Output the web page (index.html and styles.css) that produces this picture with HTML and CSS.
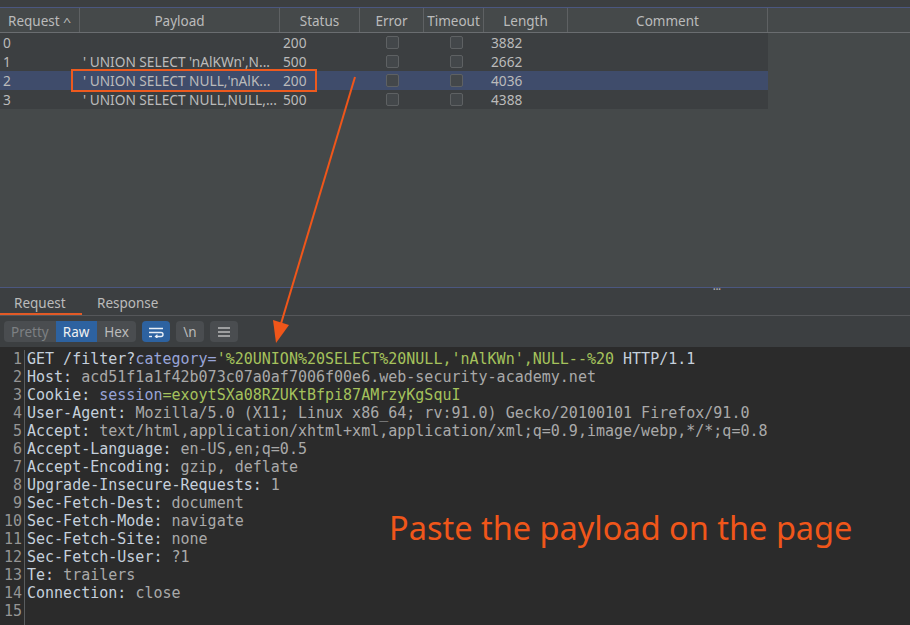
FILE: index.html
```html
<!DOCTYPE html>
<html>
<head>
<meta charset="utf-8">
<link rel="stylesheet" href="styles.css">
</head>
<body>
<div class="app">
  <div class="topstrip"></div>
  <section class="results">
    <div class="thead">
      <div class="th c-req">Request <span class="sort">^</span></div>
      <div class="th c-pay">Payload</div>
      <div class="th c-sta">Status</div>
      <div class="th c-err">Error</div>
      <div class="th c-tim">Timeout</div>
      <div class="th c-len">Length</div>
      <div class="th c-com">Comment</div>
    </div>
    <div class="tbody">
      <div class="tr">
        <div class="td c-req">0</div><div class="td c-pay"></div><div class="td c-sta">200</div>
        <div class="td c-err"><span class="cb"></span></div><div class="td c-tim"><span class="cb"></span></div>
        <div class="td c-len">3882</div><div class="td c-com"></div>
      </div>
      <div class="tr">
        <div class="td c-req">1</div><div class="td c-pay">' UNION SELECT 'nAlKWn',N...</div><div class="td c-sta">500</div>
        <div class="td c-err"><span class="cb"></span></div><div class="td c-tim"><span class="cb"></span></div>
        <div class="td c-len">2662</div><div class="td c-com"></div>
      </div>
      <div class="tr sel">
        <div class="td c-req">2</div><div class="td c-pay">' UNION SELECT NULL,'nAlK...</div><div class="td c-sta">200</div>
        <div class="td c-err"><span class="cb"></span></div><div class="td c-tim"><span class="cb"></span></div>
        <div class="td c-len">4036</div><div class="td c-com"></div>
      </div>
      <div class="tr">
        <div class="td c-req">3</div><div class="td c-pay">' UNION SELECT NULL,NULL,...</div><div class="td c-sta">500</div>
        <div class="td c-err"><span class="cb"></span></div><div class="td c-tim"><span class="cb"></span></div>
        <div class="td c-len">4388</div><div class="td c-com"></div>
      </div>
    </div>
  </section>
  <section class="lower">
    <div class="splitter"><span class="dots">•••</span></div>
    <div class="tabs">
      <div class="tab active">Request</div>
      <div class="tab">Response</div>
    </div>
    <div class="toolbar">
      <div class="seg">
        <span class="segbtn dim">Pretty</span><span class="segbtn on">Raw</span><span class="segbtn">Hex</span>
      </div>
      <div class="tbtn blue">
        <svg width="18" height="12" viewBox="0 0 18 12"><path d="M2 2.5h14M2 6.5h12a2 2 0 0 1 0 4H9" fill="none" stroke="#e8eef6" stroke-width="1.4"/><path d="M10.5 8.7 8.4 10.5l2.1 1.6" fill="none" stroke="#e8eef6" stroke-width="1.2"/><path d="M2 10.5h3" stroke="#e8eef6" stroke-width="1.4"/></svg>
      </div>
      <div class="tbtn">\n</div>
      <div class="tbtn">
        <svg width="14" height="12" viewBox="0 0 14 12"><path d="M1 2h12M1 6h12M1 10h12" stroke="#bbbbbb" stroke-width="1.4"/></svg>
      </div>
    </div>
    <div class="editor">
      <div class="gutter">
        <div>1</div><div>2</div><div>3</div><div>4</div><div>5</div><div>6</div><div>7</div><div>8</div><div>9</div><div>10</div><div>11</div><div>12</div><div>13</div><div>14</div><div>15</div>
      </div>
      <div class="code">
        <div class="ln"><span class="k">GET /filter?</span><span class="p">category=</span><span class="v">'%20UNION%20SELECT%20NULL,'nAlKWn',NULL--%20</span><span class="k"> HTTP/1.1</span></div>
        <div class="ln"><span class="k">Host:</span> <span class="g">acd51f1a1f42b073c07a0af7006f00e6.web-security-academy.net</span></div>
        <div class="ln"><span class="k">Cookie:</span> <span class="p">session</span><span class="v">=exoytSXa08RZUKtBfpi87AMrzyKgSquI</span></div>
        <div class="ln"><span class="k">User-Agent:</span> <span class="g">Mozilla/5.0 (X11; Linux x86_64; rv:91.0) Gecko/20100101 Firefox/91.0</span></div>
        <div class="ln"><span class="k">Accept:</span> <span class="g">text/html,application/xhtml+xml,application/xml;q=0.9,image/webp,*/*;q=0.8</span></div>
        <div class="ln"><span class="k">Accept-Language:</span> <span class="g">en-US,en;q=0.5</span></div>
        <div class="ln"><span class="k">Accept-Encoding:</span> <span class="g">gzip, deflate</span></div>
        <div class="ln"><span class="k">Upgrade-Insecure-Requests:</span> <span class="g">1</span></div>
        <div class="ln"><span class="k">Sec-Fetch-Dest:</span> <span class="g">document</span></div>
        <div class="ln"><span class="k">Sec-Fetch-Mode:</span> <span class="g">navigate</span></div>
        <div class="ln"><span class="k">Sec-Fetch-Site:</span> <span class="g">none</span></div>
        <div class="ln"><span class="k">Sec-Fetch-User:</span> <span class="g">?1</span></div>
        <div class="ln"><span class="k">Te:</span> <span class="g">trailers</span></div>
        <div class="ln"><span class="k">Connection:</span> <span class="g">close</span></div>
        <div class="ln">&nbsp;</div>
      </div>
    </div>
  </section>
  <div class="hl-box"></div>
  <svg class="arrow" width="910" height="625" viewBox="0 0 910 625">
    <line x1="355" y1="77" x2="280" y2="327" stroke="#f0561a" stroke-width="2"/>
    <polygon points="276,343 289,325 273,320" fill="#f0561a"/>
  </svg>
  <div class="note">Paste the payload on the page</div>
</div>
</body>
</html>
```
FILE: styles.css
```css
* { box-sizing: border-box; }
html, body { margin: 0; padding: 0; }
body { width: 910px; height: 625px; overflow: hidden; background: #2b2b2b; font-family: "Noto Sans", "DejaVu Sans", sans-serif; }
.app { position: relative; width: 910px; height: 625px; display: flex; flex-direction: column; }
.topstrip { height: 8px; background: #3c3f41; border-bottom: 1px solid #4b5780; flex: none; }
.results { height: 279px; background: #45494a; flex: none; }
.thead { display: flex; height: 25px; border-bottom: 1px solid #6a6d70; }
.th { color: #bbbbbb; font-size: 13.5px; display: flex; align-items: center; justify-content: center; border-right: 1px solid #5e6163; height: 24px; padding-top: 2px; }
.th.c-req { justify-content: flex-start; padding-left: 8px; }
.sort { font-size: 11px; margin-left: 4px; transform: scaleX(1.3); }
.c-req { width: 80px; }
.c-pay { width: 200px; }
.c-sta { width: 80px; }
.c-err { width: 64px; }
.c-tim { width: 60px; }
.c-len { width: 84px; }
.c-com { width: 200px; }
.tbody { width: 768px; background: #3c3f41; }
.tr { display: flex; height: 19px; }
.tr.sel { background: #3f4c6b; }
.td { color: #bbbbbb; font-size: 13.7px; line-height: 19px; white-space: nowrap; overflow: hidden; }
.td.c-req { padding-left: 3px; }
.td.c-pay { padding-left: 3px; }
.td.c-sta { padding-left: 3px; }
.td.c-len { padding-left: 7px; }
.td.c-err, .td.c-tim { display: flex; align-items: center; }
.td.c-err { padding-left: 26px; }
.td.c-tim { padding-left: 26px; }
.cb { display: block; width: 13px; height: 13px; border: 1px solid #5e6163; border-radius: 2px; background: #43474a; }
.lower { flex: 1; display: flex; flex-direction: column; background: #3c3f41; }
.splitter { height: 1px; background: #4b5780; position: relative; }
.dots { position: absolute; left: 713px; top: -2px; font-size: 7px; color: #aaaaaa; line-height: 10px; }
.tabs { height: 28px; display: flex; border-bottom: 1px solid #55575a; align-items: stretch; }
.tab { color: #bbbbbb; font-size: 13.5px; display: flex; align-items: center; padding: 3px 14px 0; }
.tab.active { width: 82px; border-bottom: 2px solid #e35a26; padding-top: 5px; }
.tab + .tab { padding-left: 15px; }
.toolbar { height: 31px; display: flex; align-items: center; padding: 0 4px; gap: 6px; }
.seg { display: flex; background: #4a4d50; border-radius: 4px; height: 21px; overflow: hidden; }
.segbtn { font-size: 13.5px; color: #bbbbbb; display: flex; align-items: center; padding: 0 7px; }
.segbtn.dim { color: #7d8083; }
.segbtn.on { background: #2d62a0; color: #f0f0f0; padding: 0 8px 0 7px; }
.tbtn { width: 28px; height: 21px; border-radius: 4px; background: #4a4d50; color: #bbbbbb; font-size: 13.5px; display: flex; align-items: center; justify-content: center; }
.tbtn.blue { background: #2d62a0; }
.editor { flex: 1; background: #2b2b2b; display: flex; padding-top: 3px; font-family: "DejaVu Sans Mono", monospace; font-size: 15px; line-height: 18px; }
.gutter { width: 25px; border-right: 1px solid #5a5d5f; color: #959595; text-align: right; padding-right: 2px; }
.code { padding-left: 2px; color: #a9a9a9; }
.ln { white-space: pre; height: 18px; }
.k { color: #c5d0dc; }
.g { color: #a9a9a9; }
.p { color: #98a4d8; }
.v { color: #a5c25c; }
.hl-box { position: absolute; left: 71px; top: 69px; width: 246px; height: 23px; border: 2px solid #ee5a1e; }
.arrow { position: absolute; left: 0; top: 0; pointer-events: none; }
.note { position: absolute; left: 389px; top: 506px; color: #f0561a; font-family: "Noto Sans", sans-serif; font-size: 32.5px; line-height: 44px; white-space: nowrap; }
```
